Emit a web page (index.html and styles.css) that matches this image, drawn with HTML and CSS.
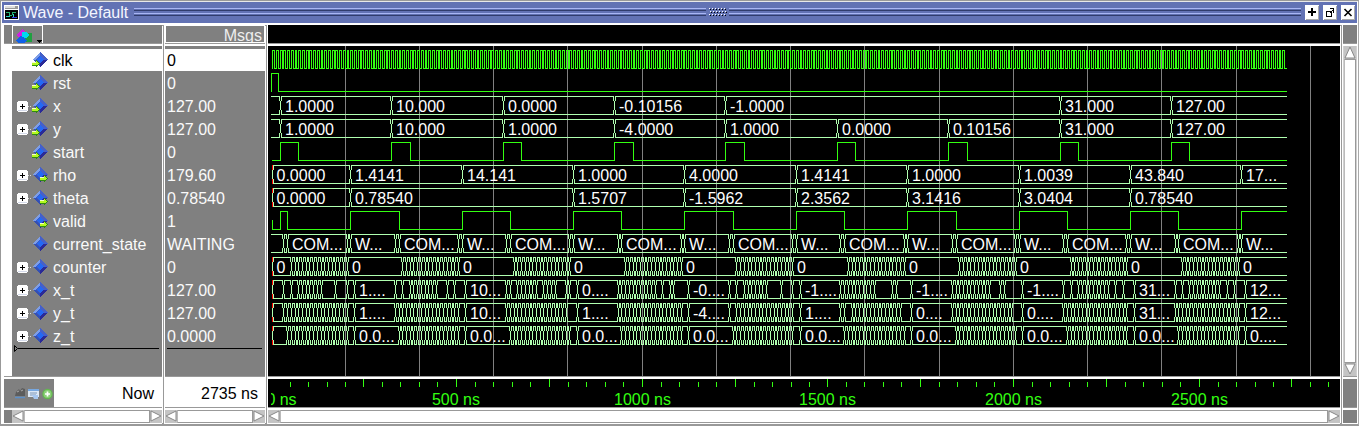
FILE: index.html
```html
<!DOCTYPE html>
<html lang="en">
<head>
<meta charset="utf-8">
<title>Wave - Default</title>
<link rel="stylesheet" href="styles.css">
</head>
<body>
<svg class="defs" width="0" height="0" shape-rendering="crispEdges">
  <defs>
    <symbol id="gem" viewBox="0 0 16 16">
      <path d="M8 0 L15.5 7.5 L8 15 L.5 7.5z" fill="#3a5cc8"/>
      <path d="M8 0 L8 4 L4 7.5 L.5 7.5z" fill="#7d9ee8"/>
      <path d="M8 0 L15.5 7.5 L12 7.5 L8 4z" fill="#4660c8"/>
      <path d="M.5 7.5 L4 7.5 L8 11 L8 15z" fill="#3450b4"/>
      <path d="M15.5 7.5 L12 7.5 L8 11 L8 15z" fill="#2a2a98"/>
      <path d="M8 4 L11.5 7.5 L8 11 L4.5 7.5z" fill="#2468f4"/>
    </symbol>
    <symbol id="arrow" viewBox="0 0 8 8">
      <path d="M0 2h4V0l4 3.5L4 8V6H0z" fill="#2f8a10"/>
      <path d="M0 2h4V1l3 2.5L5 5H0z" fill="#b4f820"/>
      <path d="M0 2h4v1H0z" fill="#f4ffc8"/>
    </symbol>
  </defs>
</svg>
<div class="window">
  <header class="title">
    <svg class="app-icon" width="15" height="15" shape-rendering="crispEdges">
      <path fill="#fff" d="M0 0h15v15H0z"/><path fill="#999" d="M1 1h13v3H1z"/><path fill="#ddd" d="M1 1h10v2H1z"/>
      <path fill="#000" d="M1 5h13v9H1z"/>
      <path d="M2 7.5h3M5.5 7v4M6 10.500h2M8.500 10V7M9 7.500h3" stroke="#28b070" fill="none"/>
      <path d="M2 11.500h4M9.500 9v3" stroke="#28d8c8"/><path d="M8 12.500h5" stroke="#3838f0"/>
    </svg>
    <span class="caption">Wave - Default</span>
    <span class="grip"></span>
    <svg class="dots" width="18" height="9" id="dots" shape-rendering="crispEdges"></svg>
    <span class="grip"></span>
    <span class="buttons">
      <svg width="14" height="15" shape-rendering="crispEdges"><path fill="#fff" d="M0 0h14v15H0z"/><path fill="#aaa" d="M13 1h1v14H1v-1h12z"/><path d="M6 3h2v3h3v2H8v3H6V8H3V6h3z"/></svg>
      <svg width="14" height="15" shape-rendering="crispEdges"><path fill="#fff" d="M0 0h14v15H0z"/><path fill="#aaa" d="M13 1h1v14H1v-1h12z"/><path d="M3.500 6.500h5v5h-5zM7 3.500h3.500v4M6.500 8.500l4-4" fill="none" stroke="#000"/></svg>
      <svg width="14" height="15"><path fill="#fff" d="M0 0h14v15H0z"/><path fill="#aaa" d="M13 1h1v14H1v-1h12z"/><path d="M3.500 4l7 7M10.500 4l-7 7" stroke="#000" stroke-width="1.600"/></svg>
    </span>
  </header>
  <main class="panes">
    <section class="pane names">
      <div class="head">
        <div class="picker">
          <svg width="30" height="18" shape-rendering="crispEdges">
            <path d="M3 9l6-6 5 5-4 1-3 4z" fill="#d020e0"/><path d="M12 7h7v9h-7z" fill="#20a040"/>
            <path d="M9 6h5l2 3-2 3H9z" fill="#00d8f0"/><path d="M3 14l4-4 3 1 4 4-3 2H5z" fill="#1060e8"/>
            <path d="M23 14h6l-3 3z"/>
          </svg>
        </div>
      </div>
      <div class="body"><div class="gutter"></div><div class="list" id="names"></div></div>
      <div class="foot">
        <div class="tools">
          <svg width="30" height="14">
            <path d="M1 9l1-4 3-3 1 2 2-3 3 1v7z" fill="#5c5c5c"/><path d="M3 5l2-1M7 4l2-1" stroke="#aaa"/><path d="M1 10.500h10" stroke="#5b8fc8" stroke-width="1.500"/>
            <path d="M14 2h11v8H14z" fill="#dce8f6"/><path d="M14 2h11v2H14z" fill="#78a8e0"/><path d="M16 6h7M16 8h6" stroke="#7f98b8"/><path d="M18 8h6v4h-4z" fill="#a8c8f0"/>
          </svg>
          <svg class="add" width="11" height="12"><circle cx="5.500" cy="6" r="5.200" fill="#62b84e"/><circle cx="5.500" cy="6" r="4" fill="#8bd078"/><path d="M5.500 3.500v5M3 6h5" stroke="#fff" stroke-width="1.700"/></svg>
        </div>
        <div class="now">Now</div>
      </div>
      <div class="scroll"><i class="corner"></i><div class="bar"><svg class="btn" width="12" height="13"><path d="M11 1v10L1 6z" fill="#fff" stroke="#888"/></svg><i class="thumb"></i><svg class="btn" width="12" height="13"><path d="M1 1v10L11 6z" fill="#fff" stroke="#888"/></svg></div></div>
    </section>
    <section class="pane values">
      <div class="head msgs">Msgs</div>
      <div class="body"><div class="list" id="values"></div></div>
      <div class="foot"><div class="now">2735 ns</div></div>
      <div class="scroll"><div class="bar"><svg class="btn" width="12" height="13"><path d="M11 1v10L1 6z" fill="#fff" stroke="#888"/></svg><i class="thumb"></i><svg class="btn" width="12" height="13"><path d="M1 1v10L11 6z" fill="#fff" stroke="#888"/></svg></div></div>
    </section>
    <section class="pane waves">
      <div class="head"></div>
      <div class="body"><svg id="wave" width="1072" height="330" viewBox="268 46 1072 330"></svg></div>
      <div class="foot"><svg id="ruler" width="1072" height="28" viewBox="268 379 1072 28"></svg></div>
      <div class="scroll"><div class="bar"><svg class="btn" width="12" height="13"><path d="M11 1v10L1 6z" fill="#fff" stroke="#888"/></svg><i class="thumb"></i><svg class="btn" width="12" height="13"><path d="M1 1v10L11 6z" fill="#fff" stroke="#888"/></svg></div></div>
    </section>
    <section class="pane side">
      <div class="head"></div>
      <div class="body"><svg class="btn" width="12" height="13"><path d="M1 12L6 1l5 11z" fill="#fff" stroke="#888"/></svg><i class="thumb"></i><svg class="btn" width="12" height="13"><path d="M1 1l5 10L11 1z" fill="#fff" stroke="#888"/></svg></div>
      <div class="foot"></div>
      <div class="scroll"></div>
    </section>
  </main>
</div>
<script src="wave.js"></script>
</body>
</html>
```
FILE: styles.css
```css
* { box-sizing: border-box; }
body { margin: 0; background: #fff; font: 16px/23px "Liberation Sans", Arial, sans-serif; overflow: hidden; }
svg { display: block; flex: none; }
.defs { position: absolute; }
.window { width: 1359px; height: 426px; display: flex; flex-direction: column; border: 1px solid #999; border-right-color: #aaa; border-bottom: 2px solid #999; }
.title { height: 23px; display: flex; align-items: center; background: #6272b4; border: 1px solid #fff; border-top-color: #e8e8e8; padding: 0 2px 0 2px; color: #f4f6ff; }
.caption { margin-left: 4px; width: 109px; white-space: nowrap; }
.grip { flex: 1; height: 9px; margin: 0 2px; background: linear-gradient(#a9b6f4 0 1px, #5f6fb0 1px 2px, #303c6c 2px 3px, #6272b4 3px 5px, #a9b6f4 5px 6px, #5f6fb0 6px 7px, #303c6c 7px 8px, #6272b4 8px); }
.buttons { display: flex; gap: 4px; margin-left: 2px; }
.dots { margin: 0 0 0 1px; }
.panes { flex: 1; display: grid; grid-template-columns: 158px 100px 1072px 14px; column-gap: 3px; padding: 1px 1px 0 3px; background: #fff; }
.pane { display: grid; grid-template-rows: 18px 330px 28px 13px; row-gap: 3px; box-shadow: 2px 0 0 -1px #fff, 2px 0 0 0 #999; }
.side { box-shadow: none; }
.head { background: #808080; }
.names .head { padding-left: 8px; }
.picker { width: 31px; height: 18px; border: 1px solid #fff; border-bottom: 0; overflow: hidden; }
.msgs { border: 1px solid #fff; color: #eee; text-align: right; line-height: 19px; padding-right: 2px; overflow: hidden; }
.head, .body, .foot { box-shadow: 0 1px 0 #999; min-width: 0; }
.body { display: flex; background: #808080; overflow: hidden; }
.gutter { width: 8px; background: #fff; }
.list { flex: 1; padding-top: 3px; color: #fafafa; }
.row { height: 23px; display: flex; align-items: center; }
.row.selected { background: linear-gradient(#fff 0 22px, #808080 22px); color: #000; }
.names .row { padding-left: 5px; }
.values .row { padding-left: 2px; }
.expander { width: 15px; height: 11px; }
.gem { margin: 0 5px 2px 0; }
.end { display: flex; height: 7px; align-items: center; margin-top: -3px; }
.end i { flex: 1; height: 1px; background: #000; margin-right: 3px; }
.end svg { margin-left: 2px; }
.values .end i { margin-left: 2px; }
.foot { display: flex; background: #fff; }
.tools { width: 50px; background: #808080; display: flex; align-items: center; padding: 2px 0 0 10px; }
.tools .add { margin-left: -2px; }
.now { flex: 1; text-align: right; padding: 3px 8px 0 0; }
.values .now { padding-right: 7px; }
.scroll { display: flex; background: #d9d9d9; }
.corner { width: 8px; background: #808080; }
.bar { flex: 1; display: flex; background: #d0d0d0; }
.btn { background: #c4c4c4; }
.thumb { flex: 1; background: #fff; border: 1px solid #999; border-left-color: #bbb; }
.waves .head, .waves .body, .waves .foot { background: #000; }
.side .body { flex-direction: column; background: #d0d0d0; padding: 0 1px; }
.side .foot, .side .scroll { background: #808080; }
text { font: 16px "Liberation Sans", Arial, sans-serif; }
```
FILE: wave.js
```js
const signals = [
  ['clk', '0', 'in'], ['rst', '0', 'in'], ['x', '127.00', 'in', 1], ['y', '127.00', 'in', 1],
  ['start', '0', 'in'], ['rho', '179.60', 'out', 1], ['theta', '0.78540', 'out', 1], ['valid', '1', 'out'],
  ['current_state', 'WAITING', ''], ['counter', '0', '', 1], ['x_t', '127.00', '', 1], ['y_t', '127.00', '', 1], ['z_t', '0.0000', '', 1]
];
const byId = id => document.getElementById(id);
const plus = '<svg class="expander" width="15" height="11" shape-rendering="crispEdges"><path fill="#fff" d="M1 0h9v1h1v9h-1v1H1v-1H0V1h1z"/><path fill="#d4daea" d="M1 9h9v1H1z"/><path d="M3 5.5h5M5.5 3v5" stroke="#000"/><path d="M11 5.5h4" stroke="#ddd" stroke-dasharray="1 1"/></svg>';
byId('names').innerHTML = signals.map(([name, , dir, bus], i) => {
  const arrow = dir ? `<use href="#arrow" x="${dir === 'in' ? 0 : 8}" y="8" width="8" height="8"/>` : '';
  return `<div class="row${i ? '' : ' selected'}">${bus ? plus : '<span class="expander"></span>'}<svg class="gem" width="16" height="16" shape-rendering="crispEdges"><use href="#gem" width="16" height="16"/>${arrow}</svg>${name}</div>`;
}).join('') + '<div class="end"><svg width="4" height="7"><path d="M.5.5v6l3-3z" fill="none" stroke="#000"/></svg><i></i></div>';
byId('values').innerHTML = signals.map((s, i) => `<div class="row${i ? '' : ' selected'}">${s[1]}</div>`).join('') + '<div class="end"><i></i></div>';

// Time (ns) to pixel column.
const X = t => Math.floor(271 + 0.3713 * t);
const END = 1287;
const rowTop = i => 50 + 23 * i;
let out = '';
const rect = (x, y, w, h, fill) => { if (w > 0) out += `<rect x="${x}" y="${y}" width="${w}" height="${h}" fill="${fill}"/>`; };
const GREEN = '#3f1', PALE = '#b0ffb0';
const label = (x, y, s) => { out += `<text x="${x}" y="${y}" fill="#fff">${s}</text>`; };

function bit(row, changes, start = 272, level = 0) {
  const y = rowTop(row);
  let x = start;
  for (const t of changes) {
    const n = X(t);
    rect(x, level ? y : y + 18, n - x + 1, 1, GREEN);
    rect(n, y, 1, 19, GREEN);
    x = n;
    level = 1 - level;
  }
  rect(x, level ? y : y + 18, END - x, 1, GREEN);
}
function bus(row, changes, labels, red) {
  const y = rowTop(row);
  let x = 271;
  if (red) {
    rect(272, y, 1, 5, '#f00'); rect(272, y + 14, 1, 5, '#f00');
    rect(272, y + 5, 1, 9, PALE);
    rect(273, y, 1, 5, PALE); rect(273, y + 14, 1, 5, PALE);
    x = 273;
  }
  for (const t of changes) {
    const n = X(t);
    rect(x, y, n - x, 1, PALE); rect(x, y + 18, n - x, 1, PALE);
    rect(n - 1, y, 1, 5, PALE); rect(n - 1, y + 14, 1, 5, PALE);
    rect(n + 1, y, 1, 5, PALE); rect(n + 1, y + 14, 1, 5, PALE);
    rect(n, y + 5, 1, 9, PALE);
    x = n + 1;
  }
  rect(x, y, END - x, 1, PALE); rect(x, y + 18, END - x, 1, PALE);
  for (const [t, s] of labels) label(X(t) + 5 - (t === 5 ? 1 : 0) + (t === 5 ? 0.5 : 0), y + 16, s);
}
const span = (a, b, step = 10) => { const r = []; for (let t = a; t <= b; t += step) r.push(t); return r; };
const periods = span(0, 8, 1);

for (const x of [345, 419, 493, 567, 642, 716, 790, 864, 939, 1013, 1087, 1161, 1236, 1310]) rect(x, 46, 1, 330, '#808080');

bit(0, span(5, 2730, 5));
bit(1, [20], 271, 1);
rect(271, 73, 1, 19, GREEN);
const xs = ['1.0000', '10.000', '0.0000', '-0.10156', '-1.0000', '', '', '31.000', '127.00'];
const ys = ['1.0000', '10.000', '1.0000', '-4.0000', '1.0000', '0.0000', '0.10156', '31.000', '127.00'];
const pick = (list, base) => list.map((s, k) => [base + 300 * k, s]).filter(e => e[1]);
const busOf = (row, events, red, extra = []) => bus(row, events.map(e => e[0]), [...extra, ...events], red);
busOf(2, pick(xs, 25));
busOf(3, pick(ys, 25));
bit(4, periods.flatMap(k => [25 + 300 * k, 75 + 300 * k]).filter(t => t < 2735));
busOf(5, pick(['1.4141', '14.141', '1.0000', '4.0000', '1.4141', '1.0000', '1.0039', '43.840', '17...'], 215), true, [[5, '0.0000']]);
busOf(6, pick(['0.78540', '', '1.5707', '-1.5962', '2.3562', '3.1416', '3.0404', '0.78540'], 215), true, [[5, '0.0000']]);
rect(272, 220, 1, 9, GREEN);
bit(7, [25, 45, ...periods.flatMap(k => [215 + 300 * k, 345 + 300 * k])].filter(t => t < 2735));
bus(8, periods.flatMap(k => [35, 45, 205, 215].map(t => t + 300 * k)),
  periods.flatMap(k => [[45 + 300 * k, 'COM...'], [215 + 300 * k, 'W...']]));
bus(9, periods.flatMap(k => span(55 + 300 * k, 205 + 300 * k)), [[5, '0'], ...periods.map(k => [205 + 300 * k, '0'])], true);
const ticks = base => (...parts) => parts.flatMap(p => Array.isArray(p) ? span(base + p[0], base + p[1]) : [base + p]);
bus(10, [
  ticks(0)(35, 55, [75, 135], 175, 205, 225),
  ticks(300)(35, 55, [75, 145], 175, 195, 225),
  ticks(600)(35, 45, [65, 115], [135, 165], 195, 205, 225),
  ticks(900)([35, 135], 155, 175, 185, 225),
  ticks(1200)(35, 55, [75, 135], 175, 205, 225),
  ticks(1500)([35, 125], 175, 185, 225),
  ticks(1800)([35, 135], 165, 175, 225),
  ticks(2100)(35, 55, [75, 155], 175, 195, 225),
  ticks(2400)(35, 55, [75, 155], 175, 195, 225)
].flat(), pick(['1....', '10...', '0....', '-0....', '-1....', '-1....', '-1....', '31...', '12...'], 225), true);
bus(11, [
  ticks(0)([35, 205], 225), ticks(300)([35, 205], 225), ticks(600)([35, 195], 225),
  ticks(900)([35, 205], 225), ticks(1200)(35, [55, 205], 225), ticks(1500)(35, 45, [65, 195], 225),
  ticks(1800)([35, 195], 225), ticks(2100)([35, 205], 225), ticks(2400)([35, 205], 225)
].flat(), pick(['1....', '10...', '1....', '-4....', '1....', '0....', '0....', '31...', '12...'], 225), true);
bus(12, periods.flatMap(k => ticks(300 * k)([45, 205], 225)),
  periods.map(k => [225 + 300 * k, k === 8 ? '0....' : '0.0...']), true);
byId('wave').innerHTML = `<g shape-rendering="crispEdges">${out}</g>`;

out = '';
const marks = [290, 308, 327, 345, 363, 382, 400, 419, 437, 456, 475, 493, 512, 530, 549, 568, 586, 605, 623, 642, 661, 679, 698, 716, 735, 754, 772, 791, 809, 827, 846, 864, 883, 901, 920, 939, 957, 976, 994, 1013, 1032, 1050, 1069, 1087, 1106, 1125, 1143, 1162, 1180, 1199, 1218, 1236, 1255, 1273, 1291, 1310, 1328];
marks.forEach((x, i) => (i + 1) % 5 ? rect(x, 382, 1, 5, GREEN) : rect(x, 379, 1, 8, GREEN));
[[281.5, 0], [456, 500], [642.5, 1000], [827.5, 1500], [1013.5, 2000], [1199.5, 2500]].forEach(([x, n]) => {
  out += `<text x="${x}" y="405" text-anchor="middle" fill="${GREEN}">${n} ns</text>`;
});
rect(268, 379, 3, 28, '#000');
byId('ruler').innerHTML = out;

out = '';
for (let i = 0; i < 6; i++) for (let j = 0; j < 3; j++) {
  const x = i * 3 + (j === 1 ? 1 : 0);
  rect(x, j * 3, 1, 1, '#fff'); rect(x + 1, j * 3 + 1, 1, 1, '#000');
}
byId('dots').innerHTML = out;
```
